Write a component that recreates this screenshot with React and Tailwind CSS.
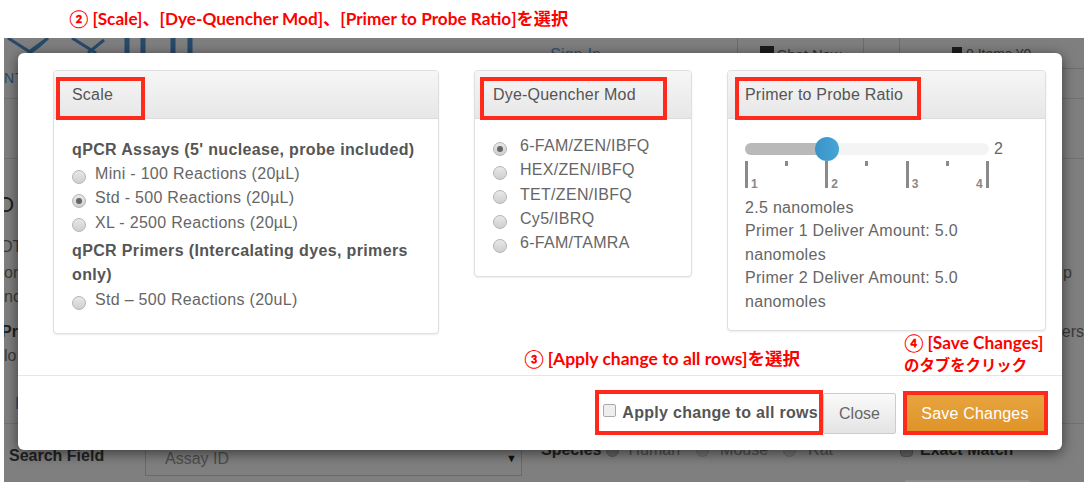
const sans = "font-['Liberation_Sans',Arial,sans-serif]";
const note = "font-['Lato','Noto_Sans_CJK_JP',sans-serif] font-bold text-[#ff0000]";

function Radio({ label, checked, gap = "mr-[9px]" }) {
  return (
    <div className="flex h-[24.3px] items-center text-[16px] leading-none tracking-[0.3px] text-[#666]">
      <span className={`${gap} mt-[5px] flex h-[14px] w-[14px] shrink-0 items-center justify-center rounded-full border border-[#b5b5b5] bg-gradient-to-b from-[#e8e8e8] to-[#cfcfcf]`}>
        {checked && <span className="h-[6px] w-[6px] rounded-full bg-[#666]" />}
      </span>
      {label}
    </div>
  );
}

function Panel({ title, className, bodyClass, children }) {
  return (
    <div className={`shrink-0 overflow-hidden rounded-[4px] border border-[#dfdfdf] bg-white shadow-[0_1px_2px_rgba(0,0,0,0.08)] ${className}`}>
      <div className="flex h-[48px] items-center border-b border-[#dcdcdc] bg-gradient-to-b from-[#f6f6f6] to-[#e7e7e7] text-[16px] tracking-[0.2px] text-[#555]">
        {title}
      </div>
      <div className={bodyClass}>{children}</div>
    </div>
  );
}

function Box({ className }) {
  return <div className={`absolute border-[4px] border-[#ff2a1c] ${className}`} />;
}

function Tick({ tall, n, right }) {
  return (
    <div className="relative h-[27px] w-[3px]">
      <div className={tall ? "h-[27px] w-[3px] bg-[#8a8a8a]" : "h-[5px] w-[3px] bg-[#8a8a8a]"} />
      {n && (
        <span className={`absolute top-[17px] text-[12px] font-bold leading-none text-[#888] ${right ? "right-[6px]" : "left-[6px]"}`}>
          {n}
        </span>
      )}
    </div>
  );
}

function Logo() {
  return (
    <svg width="200" height="16" viewBox="0 0 200 16" className="shrink-0" fill="none" stroke="#27496a">
      <path d="M4 0 L26 14 M44 0 L25 14 M-4 30 C12 24 30 14 44 0" strokeWidth="3" />
      <path d="M68 0 L92 15 M100 2 L84 15" strokeWidth="3" />
      <path d="M123 0 V16 M139 0 V16 M169 0 V16 M186 0 V16" strokeWidth="5" />
    </svg>
  );
}

export default function App() {
  return (
    <div className={`h-[482px] w-[1084px] overflow-hidden bg-white ${sans}`}>
      <div className={`flex h-[38px] items-start pl-[69px] pt-[8px] text-[17.2px] leading-[22px] ${note}`}>
        ② [Scale]、[Dye-Quencher Mod]、[Primer to Probe Ratio]を選択
      </div>
      <div className="relative ml-[4px] h-[444px] overflow-hidden bg-[#7f7f7f] text-[16px]">
        {/* dimmed page behind the dialog */}
        <div className="flex h-[61px] items-start justify-between border-b border-[#727272]">
          <div>
            <Logo />
            <div className="mt-[15px] text-[14px] leading-[18px] tracking-[1px] text-[#27496a]">NT</div>
          </div>
          <div className="flex h-[31px]">
            <span className="mr-[136px] pt-[5px] text-[#35506b]">Sign-In</span>
            <div className="flex w-[127px] justify-center gap-[3px] border-x border-b border-[#6c6c6c] pt-[6px] text-[14.8px] text-[#333]">
              <span className="mt-[2px] h-[14px] w-[14px] bg-[#1c1c1c]" />
              Chat Now
            </div>
            <div className="w-[35px]" />
            <div className="flex w-[185px] justify-start gap-[4px] border-b border-l border-[#6c6c6c] pl-[52px] pt-[6px] text-[14px] text-[#333]">
              <span className="mt-[3px] h-[12px] w-[10px] bg-[#1c1c1c]" />
              0 Items ¥0
            </div>
          </div>
        </div>
        <div className="h-[60px] border-b border-[#727272]" />
        <div className="h-[265px] border-b border-[#727272] leading-[20px] text-[#3a3a3a]">
          <div className="ml-[-7px] pt-[33px] text-[22px] leading-[26px] text-[#1d1d1d]">O</div>
          <div className="ml-[-3px] mt-[19px] h-[26px]">DT</div>
          <div className="flex h-[24px] justify-between">
            <span>or</span>
            <span className="pr-[12px]">p</span>
          </div>
          <div className="h-[35px]">nc</div>
          <div className="flex h-[24px] justify-between">
            <span className="ml-[-3px] font-bold text-[#222]">Pri</span>
            <span>ers</span>
          </div>
          <div className="h-[48px]">lo</div>
          <div className="pl-[11px] text-[#30506e]">E</div>
        </div>
        <div className="flex items-start pl-[5px] pt-[3px]">
          <span className="mt-[17px] w-[136px] font-bold text-[#222]">Search Field</span>
          <div className="mt-[13px] flex h-[36px] w-[377px] items-start justify-between border border-[#6a6a6a] pl-[19px] pr-[4px] pt-[6px] text-[#4d4d4d]">
            Assay ID
            <span className="mt-[3px] text-[11px] text-[#111]">▼</span>
          </div>
          <div className="ml-[19px] mt-[11px] flex items-center font-bold text-[#222]">
            Species
            <span className="ml-[5px] h-[13px] w-[13px] rounded-full border border-[#555] bg-[#666]" />
            <span className="ml-[9px] font-normal text-[#4d4d4d]">Human</span>
            <span className="ml-[16px] h-[13px] w-[13px] rounded-full border border-[#666] bg-[#747474]" />
            <span className="ml-[11px] font-normal text-[#4d4d4d]">Mouse</span>
            <span className="ml-[15px] h-[13px] w-[13px] rounded-full border border-[#666] bg-[#747474]" />
            <span className="ml-[12px] font-normal text-[#4d4d4d]">Rat</span>
            <span className="ml-[67px] h-[13px] w-[13px] rounded-sm border border-[#555] bg-[#666]" />
            <span className="ml-[7px]">Exact Match</span>
          </div>
        </div>
        <div className="ml-[901px] mt-[4px] h-[10px] w-[125px] bg-[#8b8b8b]" />

        {/* dialog */}
        <div className="absolute left-[14px] top-[15px] h-[397px] w-[1044px] rounded-[6px] bg-white shadow-[0_3px_14px_rgba(0,0,0,0.55)]">
          <div className="flex h-[322px] items-start pl-[35px] pt-[17px]">
            <Panel title={<span className="pl-[18px]">Scale</span>} className="h-[264px] w-[386px]" bodyClass="px-[18px] pt-[17px]">
              <div className="mt-[2px] text-[16px] font-bold leading-[24px] tracking-[0.36px] text-[#555]">qPCR Assays (5' nuclease, probe included)</div>
              <Radio label="Mini - 100 Reactions (20µL)" />
              <Radio label="Std - 500 Reactions (20µL)" checked />
              <Radio label="XL - 2500 Reactions (20µL)" />
              <div className="mb-[1px] mt-[4px] text-[16px] font-bold leading-[24px] tracking-[0.36px] text-[#555]">qPCR Primers (Intercalating dyes, primers only)</div>
              <Radio label="Std – 500 Reactions (20uL)" />
            </Panel>
            <Panel title={<span className="pl-[18px]">Dye-Quencher Mod</span>} className="ml-[35px] h-[207px] w-[218px]" bodyClass="px-[18px] pt-[15px]">
              <Radio label="6-FAM/ZEN/IBFQ" checked gap="mr-[13px]" />
              <Radio label="HEX/ZEN/IBFQ" gap="mr-[13px]" />
              <Radio label="TET/ZEN/IBFQ" gap="mr-[13px]" />
              <Radio label="Cy5/IBRQ" gap="mr-[13px]" />
              <Radio label="6-FAM/TAMRA" gap="mr-[13px]" />
            </Panel>
            <Panel title={<span className="pl-[17px]">Primer to Probe Ratio</span>} className="ml-[35px] h-[261px] w-[319px]" bodyClass="px-[17px] pt-[24px] text-[16px] leading-[23.5px] tracking-[0.3px] text-[#666]">
              <div className="flex h-[12px] items-center">
                <div className="relative h-[12px] w-[244px] rounded-full bg-[#f4f4f4]">
                  <div className="h-[12px] w-[80px] rounded-l-full bg-[#b9b9b9]" />
                  <div className="absolute left-[70px] top-[-6px] h-[24px] w-[24px] rounded-full bg-gradient-to-r from-[#3b93c5] to-[#46a5d8]" />
                </div>
                <span className="ml-[5px] text-[#666]">2</span>
              </div>
              <div className="mt-[6px] flex h-[32px] w-[244px] justify-between">
                <Tick tall n="1" />
                <Tick />
                <Tick tall n="2" />
                <Tick />
                <Tick tall n="3" />
                <Tick />
                <Tick tall n="4" right />
              </div>
              <div className="mt-[2.5px]">2.5 nanomoles</div>
              <div>Primer 1 Deliver Amount: 5.0 nanomoles</div>
              <div>Primer 2 Deliver Amount: 5.0 nanomoles</div>
            </Panel>
          </div>
          <div className="flex h-[75px] items-start justify-end border-t border-[#e5e5e5] pr-[17px] pt-[17px]">
            <label className="mr-[5px] mt-[8px] flex items-center text-[16px] font-bold tracking-[0.3px] text-[#555]">
              <span className="mb-[6px] mr-[6px] h-[13px] w-[13px] rounded-[2px] border border-[#aaa] bg-[#eee]" />
              Apply change to all rows
            </label>
            <button className="mr-[9px] h-[41px] w-[73px] rounded-[2px] border border-[#ccc] bg-gradient-to-b from-[#fafafa] to-[#e4e4e4] text-[16px] text-[#666]">Close</button>
            <button className="h-[41px] w-[140px] rounded-[2px] border border-[#d98f22] bg-gradient-to-b from-[#e8a540] to-[#df9226] text-[16px] tracking-[0.2px] text-white">Save Changes</button>
          </div>

          {/* annotations on top of the dialog */}
          <Box className="left-[38px] top-[24px] h-[43px] w-[89px]" />
          <Box className="left-[462px] top-[24px] h-[43px] w-[187px]" />
          <Box className="left-[717px] top-[24px] h-[43px] w-[186px]" />
          <Box className="left-[577px] top-[337px] h-[45px] w-[228px]" />
          <Box className="left-[885px] top-[338px] h-[44px] w-[145px]" />
          <div className={`absolute left-[506px] top-[295px] text-[17.5px] leading-[22px] ${note}`}>③ [Apply change to all rows]を選択</div>
          <div className={`absolute left-[886px] top-[279px] leading-[22px] ${note}`}>
            <div className="text-[17.3px]">④ [Save Changes]</div>
            <div className="text-[15.4px]">のタブをクリック</div>
          </div>
        </div>
      </div>
    </div>
  );
}
